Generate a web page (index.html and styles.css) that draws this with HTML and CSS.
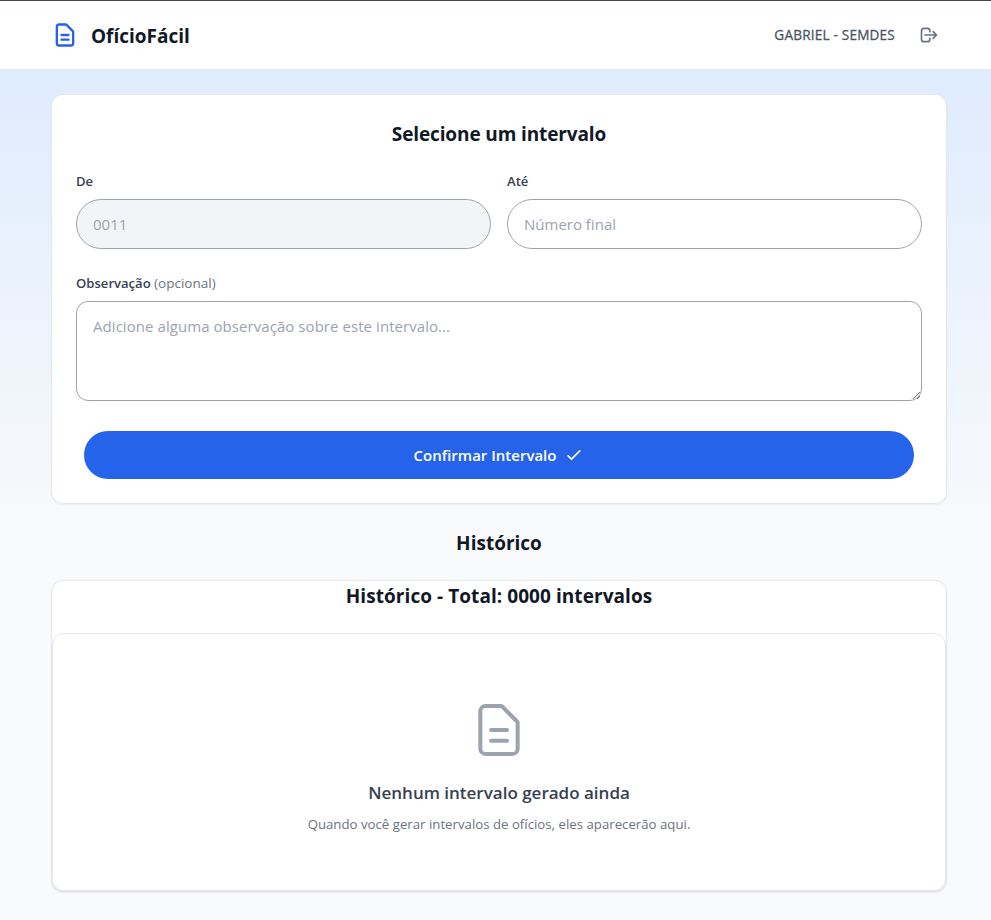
FILE: index.html
```html
<!DOCTYPE html>
<html lang="pt-BR">
<head>
<meta charset="utf-8">
<title>OfícioFácil</title>
<link rel="stylesheet" href="styles.css">
</head>
<body>
<header class="header">
  <div class="container header-row">
    <svg class="logo" viewBox="0 0 24 24"><path d="M9 12h6m-6 4h6m2 5H7a2 2 0 01-2-2V5a2 2 0 012-2h5.586a1 1 0 01.707.293l5.414 5.414a1 1 0 01.293.707V19a2 2 0 01-2 2z"/></svg>
    <span class="brand">OfícioFácil</span>
    <span class="user">GABRIEL - SEMDES</span>
    <button class="logout" aria-label="Sair"><svg viewBox="0 0 24 24"><path d="M17 16l4-4m0 0l-4-4m4 4H7m6 4v1a3 3 0 01-3 3H6a3 3 0 01-3-3V7a3 3 0 013-3h4a3 3 0 013 3v1"/></svg></button>
  </div>
</header>
<main class="container main">
  <section class="card form">
    <h2 class="title select-title">Selecione um intervalo</h2>
    <div class="fields">
      <div><label class="label" for="de">De</label><input class="input" id="de" placeholder="0011" disabled></div>
      <div><label class="label" for="ate">Até</label><input class="input" id="ate" placeholder="Número final"></div>
    </div>
    <label class="label obs-label" for="obs">Observação <span class="optional">(opcional)</span></label>
    <textarea class="input area" id="obs" placeholder="Adicione alguma observação sobre este intervalo..."></textarea>
    <button class="confirm"><span>Confirmar Intervalo</span><svg viewBox="0 0 24 24"><path d="M5 13l4 4L19 7"/></svg></button>
  </section>
  <h2 class="title history-title">Histórico</h2>
  <section class="card history">
    <h2 class="title total-title">Histórico - Total: 0000 intervalos</h2>
    <div class="card empty">
      <svg viewBox="0 0 24 24"><path d="M9 12h6m-6 4h6m2 5H7a2 2 0 01-2-2V5a2 2 0 012-2h5.586a1 1 0 01.707.293l5.414 5.414a1 1 0 01.293.707V19a2 2 0 01-2 2z"/></svg>
      <h3 class="empty-title">Nenhum intervalo gerado ainda</h3>
      <p class="empty-text">Quando você gerar intervalos de ofícios, eles aparecerão aqui.</p>
    </div>
  </section>
</main>
</body>
</html>
```
FILE: styles.css
```css
* { box-sizing: border-box; margin: 0; padding: 0; }
body {
  height: 920px;
  overflow: hidden;
  font-family: "Open Sans", "Noto Sans", sans-serif;
  color: #111827;
  background: linear-gradient(#dbeafe 0, #f9fafb 550px);
}
svg { fill: none; stroke: currentColor; stroke-width: 2; stroke-linecap: round; stroke-linejoin: round; flex: none; }
.container { width: 896px; margin-left: 51px; }
.header { height: 70px; background: #fff; border-top: 1px solid #3f484b; border-bottom: 1px solid #e5e7eb; }
.header-row { display: flex; align-items: center; height: 68px; }
.logo { width: 28px; height: 28px; color: #2563eb; }
.brand { margin-left: 12px; padding-top: 2px; font-size: 19px; font-weight: 700; }
.user { margin-left: auto; padding-bottom: 2px; font-size: 13.6px; font-weight: 500; letter-spacing: .19px; -webkit-text-stroke: .3px currentColor; color: #4b5563; }
.logout { display: flex; padding: 8px; margin-left: 16px; border: 0; background: none; color: #6b7280; }
.logout svg { width: 20px; height: 20px; }
.main { padding-top: 24px; }
.card { background: #fff; border: 1px solid #e5e7eb; border-radius: 12px; box-shadow: 0 1px 2px rgba(0, 0, 0, .05); }
.form { height: 410px; padding: 24px; }
.title { font-size: 19px; line-height: 28px; font-weight: 700; text-align: center; }
.select-title { line-height: 30px; letter-spacing: -.12px; }
.fields { display: grid; grid-template-columns: 1fr 1fr; gap: 16px; margin-top: 22px; }
.label { display: block; font-size: 13.1px; line-height: 20px; font-weight: 600; color: #374151; margin-bottom: 8px; }
.optional { font-size: 13.5px; font-weight: 400; color: #6b7280; }
.input { display: block; width: 100%; height: 50px; padding: 12px 16px; border: 1px solid #9ca3af; border-radius: 25px; background: #fff; font: 15px/24px "Open Sans", sans-serif; }
.input::placeholder { color: #9ca3af; opacity: 1; }
.input:disabled { background: #f3f4f6; }
.obs-label { margin-top: 24px; }
.area { height: 100px; border-radius: 12px; letter-spacing: .06px; resize: vertical; }
.confirm { display: flex; align-items: center; justify-content: center; gap: 8px; width: 830px; height: 48px; margin: 30px 8px 0; border: 0; border-radius: 24px; background: #2563eb; color: #fff; font: 600 15px/24px "Open Sans", sans-serif; }
.confirm svg { width: 20px; height: 20px; }
.history-title { margin: 25px 0 23px; }
.history { height: 312px; }
.total-title { height: 52px; line-height: 30px; letter-spacing: .06px; }
.empty { display: flex; flex-direction: column; align-items: center; height: 258px; padding-top: 64px; }
.empty svg { width: 64px; height: 64px; color: #9ca3af; stroke-width: 1.5; }
.empty-title { margin-top: 17px; font-size: 17px; line-height: 28px; font-weight: 600; color: #374151; }
.empty-text { margin-top: 7px; font-size: 13.2px; line-height: 20px; letter-spacing: .02px; color: #6b7280; }
```
